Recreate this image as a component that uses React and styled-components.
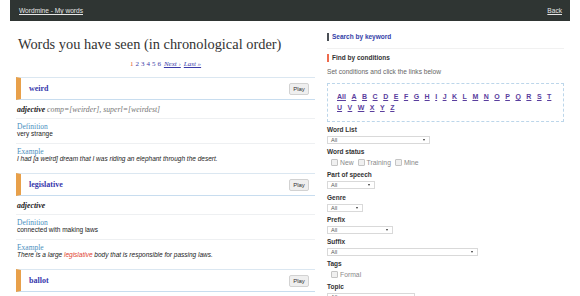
import React from 'react';
import styled, { createGlobalStyle } from 'styled-components';

const Global = createGlobalStyle`
  html, body { margin: 0; padding: 0; background: #fff; }
  body { font-family: "Liberation Sans", Arial, sans-serif; color: #333; }
  * { box-sizing: border-box; }
`;

const Page = styled.div`
  width: 580px;
  height: 296px;
  overflow: hidden;
  padding: 0 10px;
`;

const TopBar = styled.header`
  height: 21px;
  background: #2f3533;
  display: flex;
  align-items: center;
  justify-content: space-between;
  padding: 0 8px 0 9px;
`;

const BarLink = styled.a`
  color: #e6e6e6;
  font-size: 6.6px;
  line-height: 9px;
  text-decoration: underline;
`;

const Main = styled.div`
  display: grid;
  grid-template-columns: 299px 1fr;
  column-gap: 12px;
  padding-left: 6px;
`;

const LeftCol = styled.section`
  display: flex;
  flex-direction: column;
`;

const Heading = styled.h1`
  margin: 13px 0 0 2px;
  font: 400 14.4px/20px "Liberation Serif", serif;
  color: #333;
`;

const Pager = styled.nav`
  margin: 5px 0 8px;
  text-align: center;
  font: 7px/10px "Liberation Serif", serif;
  display: flex;
  justify-content: center;
  gap: 2px;
`;

const PageLink = styled.a`
  color: ${(p) => (p.$current ? '#e0532d' : '#3a3aa8')};
  text-decoration: ${(p) => (p.$text ? 'underline' : 'none')};
  font-style: ${(p) => (p.$text ? 'italic' : 'normal')};
  margin-left: ${(p) => (p.$text ? '1px' : '0')};
`;

const Entry = styled.article`
  display: flex;
  flex-direction: column;
`;

const EntryHeader = styled.div`
  height: 23px;
  border-top: 1px solid #dbe7f1;
  border-bottom: 1px solid #c8ddef;
  border-left: 5px solid #e8a04a;
  display: flex;
  align-items: center;
  justify-content: space-between;
  padding: 0 6px 0 8px;
`;

const WordLink = styled.a`
  font: 700 8px/10px "Liberation Serif", serif;
  color: #3838ac;
  text-decoration: none;
`;

const PlayButton = styled.button`
  width: 20px;
  height: 12px;
  padding: 0;
  font: 6px/10px "Liberation Sans", Arial, sans-serif;
  color: #333;
  background: #efefef;
  border: 1px solid #d2d2d2;
  border-radius: 2px;
`;

const Pos = styled.div`
  padding: 6px 0 4px 1px;
  border-bottom: 1px solid #eef0f2;
  font: italic 7.8px/8px "Liberation Serif", serif;
  color: #777;
  b { color: #222; font-weight: 700; }
`;

const Block = styled.div`
  padding: 4px 0 ${(p) => (p.$last ? '11px' : '6px')} 1px;
  border-bottom: ${(p) => (p.$last ? 'none' : '1px solid #eef0f2')};
`;

const BlockLabel = styled.div`
  font: 7.5px/7px "Liberation Serif", serif;
  color: #4a8fc0;
`;

const BlockText = styled.div`
  font: ${(p) => (p.$italic ? 'italic ' : '')}6.5px/7px "Liberation Sans", Arial, sans-serif;
  color: #222;
`;

const Highlight = styled.span`
  color: #e0412d;
`;

const RightCol = styled.aside`
  display: flex;
  flex-direction: column;
  padding-right: 6px;
`;

const SideHead = styled.div`
  display: flex;
  align-items: center;
  gap: 3px;
  font: 700 6.5px/10px "Liberation Sans", Arial, sans-serif;
  color: ${(p) => (p.$link ? '#3341a8' : '#333')};
  margin-top: ${(p) => p.$mt}px;
  padding-bottom: ${(p) => p.$pb || 0}px;
  border-bottom: ${(p) => (p.$pb ? '1px solid #f1f1f1' : 'none')};
  &::before {
    content: '';
    width: 2px;
    height: 8px;
    background: ${(p) => (p.$link ? '#4a4f55' : '#ee6b4d')};
  }
`;

const Hint = styled.div`
  margin-top: 5px;
  font: 6.6px/8px "Liberation Sans", Arial, sans-serif;
  color: #666;
`;

const LetterBox = styled.div`
  margin: 7px 0 2.5px;
  height: 39px;
  border: 1px dashed #bcd6ea;
  padding: 7px 9px 8px 9px;
  display: flex;
  flex-direction: column;
`;

const LetterRow = styled.div`
  height: 11px;
  display: flex;
  align-items: center;
  gap: 5.5px;
`;

const Letter = styled.a`
  font: 700 7px/9px "Liberation Sans", Arial, sans-serif;
  color: #5a3e9e;
  text-decoration: underline;
`;

const Field = styled.div`
  display: flex;
  flex-direction: column;
  padding-bottom: ${(p) => p.$pb ?? 3}px;
`;

const FieldLabel = styled.div`
  font: 700 6.5px/9px "Liberation Sans", Arial, sans-serif;
  color: #333;
`;

const Select = styled.div`
  margin-top: 2px;
  width: ${(p) => p.$w}px;
  height: 8px;
  border: 1px solid #d9d9d9;
  background: #fff;
  display: flex;
  align-items: center;
  justify-content: space-between;
  padding: 0 4px 0 3px;
  font: 5.5px/6px "Liberation Sans", Arial, sans-serif;
  color: #555;
  &::after {
    content: '';
    border-left: 1.5px solid transparent;
    border-right: 1.5px solid transparent;
    border-top: 2px solid #333;
  }
`;

const CheckRow = styled.div`
  margin-top: 2px;
  height: 10px;
  display: flex;
  align-items: center;
  gap: 4px;
  padding-left: 4px;
`;

const Check = styled.label`
  display: flex;
  align-items: center;
  gap: 2px;
  font: 6.8px/8px "Liberation Sans", Arial, sans-serif;
  color: #8a8a8a;
  &::before {
    content: '';
    width: 5px;
    height: 5px;
    border: 1px solid #c4c4c4;
    background: #f0f0f0;
    border-radius: 1px;
  }
`;

const entries = [
  {
    word: 'weird',
    pos: 'adjective',
    forms: 'comp=[weirder], superl=[weirdest]',
    def: 'very strange',
    example: ['I had [a weird] dream that I was riding an elephant through the desert.'],
  },
  {
    word: 'legislative',
    pos: 'adjective',
    forms: '',
    def: 'connected with making laws',
    example: ['There is a large ', 'legislative', ' body that is responsible for passing laws.'],
  },
  { word: 'ballot' },
];

const row1 = ['All', 'A', 'B', 'C', 'D', 'E', 'F', 'G', 'H', 'I', 'J', 'K', 'L', 'M', 'N', 'O', 'P', 'Q', 'R', 'S', 'T'];
const row2 = ['U', 'V', 'W', 'X', 'Y', 'Z'];

function WordEntry({ e }) {
  return (
    <Entry>
      <EntryHeader>
        <WordLink href="#">{e.word}</WordLink>
        <PlayButton>Play</PlayButton>
      </EntryHeader>
      {e.pos && (
        <>
          <Pos>
            <b>{e.pos}</b> {e.forms}
          </Pos>
          <Block>
            <BlockLabel>Definition</BlockLabel>
            <BlockText>{e.def}</BlockText>
          </Block>
          <Block $last>
            <BlockLabel>Example</BlockLabel>
            <BlockText $italic>
              {e.example.length === 3 ? (
                <>
                  {e.example[0]}
                  <Highlight>{e.example[1]}</Highlight>
                  {e.example[2]}
                </>
              ) : (
                e.example[0]
              )}
            </BlockText>
          </Block>
        </>
      )}
    </Entry>
  );
}

export default function App() {
  return (
    <Page>
      <Global />
      <TopBar>
        <BarLink href="#">Wordmine - My words</BarLink>
        <BarLink href="#">Back</BarLink>
      </TopBar>
      <Main>
        <LeftCol>
          <Heading>Words you have seen (in chronological order)</Heading>
          <Pager>
            <PageLink $current>1</PageLink>
            {[2, 3, 4, 5, 6].map((n) => (
              <PageLink key={n} href="#">{n}</PageLink>
            ))}
            <PageLink $text href="#">Next ›</PageLink>
            <PageLink $text href="#">Last »</PageLink>
          </Pager>
          {entries.map((e) => (
            <WordEntry key={e.word} e={e} />
          ))}
        </LeftCol>
        <RightCol>
          <SideHead $link $mt={11} $pb={6}>Search by keyword</SideHead>
          <SideHead $mt={4}>Find by conditions</SideHead>
          <Hint>Set conditions and click the links below</Hint>
          <LetterBox>
            <LetterRow>
              {row1.map((l) => (
                <Letter key={l} href="#">{l}</Letter>
              ))}
            </LetterRow>
            <LetterRow>
              {row2.map((l) => (
                <Letter key={l} href="#">{l}</Letter>
              ))}
            </LetterRow>
          </LetterBox>
          <Field>
            <FieldLabel>Word List</FieldLabel>
            <Select $w={103}>All</Select>
          </Field>
          <Field $pb={2}>
            <FieldLabel>Word status</FieldLabel>
            <CheckRow>
              <Check>New</Check>
              <Check>Training</Check>
              <Check>Mine</Check>
            </CheckRow>
          </Field>
          <Field $pb={4}>
            <FieldLabel>Part of speech</FieldLabel>
            <Select $w={48}>All</Select>
          </Field>
          <Field>
            <FieldLabel>Genre</FieldLabel>
            <Select $w={36}>All</Select>
          </Field>
          <Field>
            <FieldLabel>Prefix</FieldLabel>
            <Select $w={66}>All</Select>
          </Field>
          <Field>
            <FieldLabel>Suffix</FieldLabel>
            <Select $w={151}>All</Select>
          </Field>
          <Field $pb={2}>
            <FieldLabel>Tags</FieldLabel>
            <CheckRow>
              <Check>Formal</Check>
            </CheckRow>
          </Field>
          <Field>
            <FieldLabel>Topic</FieldLabel>
            <Select $w={88}>All</Select>
          </Field>
        </RightCol>
      </Main>
    </Page>
  );
}
